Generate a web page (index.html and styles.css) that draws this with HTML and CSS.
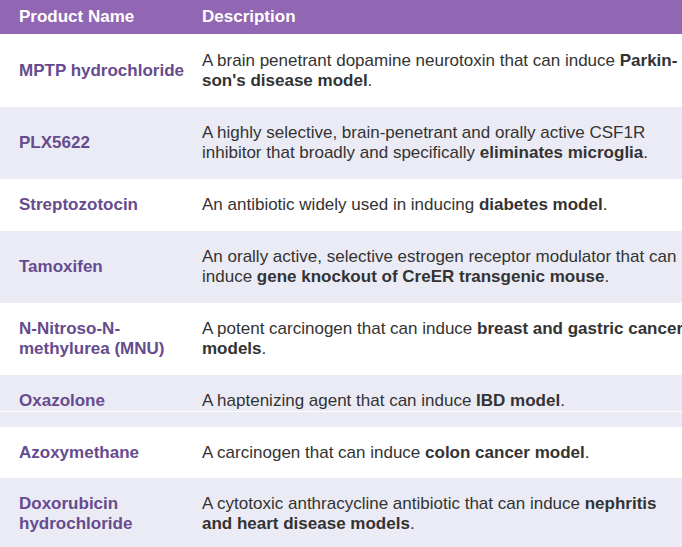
FILE: index.html
```html
<!DOCTYPE html>
<html>
<head>
<meta charset="utf-8">
<link rel="stylesheet" href="styles.css">
</head>
<body>
<div class="table">
  <div class="row head">
    <div class="name">Product Name</div>
    <div class="desc">Description</div>
  </div>
  <div class="row first">
    <div class="name">MPTP hydrochloride</div>
    <div class="desc">A brain penetrant dopamine neurotoxin that can induce <b>Parkin&shy;son's disease model</b>.</div>
  </div>
  <div class="row alt">
    <div class="name">PLX5622</div>
    <div class="desc">A highly selective, brain-penetrant and orally active CSF1R inhibitor that broadly and specifically <b>eliminates microglia</b>.</div>
  </div>
  <div class="row">
    <div class="name">Streptozotocin</div>
    <div class="desc">An antibiotic widely used in inducing <b>diabetes model</b>.</div>
  </div>
  <div class="row alt">
    <div class="name">Tamoxifen</div>
    <div class="desc">An orally active, selective estrogen receptor modulator that can induce <b>gene knockout of CreER transgenic mouse</b>.</div>
  </div>
  <div class="row">
    <div class="name">N-Nitroso-N-<br>methylurea (MNU)</div>
    <div class="desc">A potent carcinogen that can induce <b>breast and gastric cancer models</b>.</div>
  </div>
  <div class="row alt split">
    <div class="name">Oxazolone</div>
    <div class="desc">A haptenizing agent that can induce <b>IBD model</b>.</div>
  </div>
  <div class="row short">
    <div class="name">Azoxymethane</div>
    <div class="desc">A carcinogen that can induce <b>colon cancer model</b>.</div>
  </div>
  <div class="row alt">
    <div class="name">Doxorubicin<br>hydrochloride</div>
    <div class="desc">A cytotoxic anthracycline antibiotic that can induce <b>nephritis and heart disease models</b>.</div>
  </div>
</div>
</body>
</html>
```

FILE: styles.css
```css
html, body {
  margin: 0;
  padding: 0;
  overflow: hidden;
  background: #ffffff;
}
.table {
  width: 720px;
  font-family: "Liberation Sans", Arial, sans-serif;
  font-size: 17px;
  line-height: 20px;
  color: #333333;
}
.row {
  display: flex;
  align-items: center;
  padding: 16px 0;
}
.row.first {
  padding: 17px 0 16px;
}
.row.short {
  padding: 16px 0 15px;
}
.row.alt {
  background: #ebebf5;
}
.row.split {
  background: linear-gradient(#ebebf5 0, #ebebf5 36px, #ffffff 36px, #ffffff 37px, #ebebf5 37px);
}
.row.head {
  background: #9166b3;
  padding: 7px 0;
  color: #ffffff;
  font-weight: bold;
}
.row.head .name {
  color: #ffffff;
}
.name {
  box-sizing: border-box;
  width: 202px;
  padding-left: 19px;
  flex: none;
  white-space: nowrap;
  font-weight: bold;
  color: #664b8f;
}
.desc {
  width: 483px;
  flex: none;
  hyphens: manual;
}
.desc b {
  font-weight: bold;
  color: #333333;
}
```
